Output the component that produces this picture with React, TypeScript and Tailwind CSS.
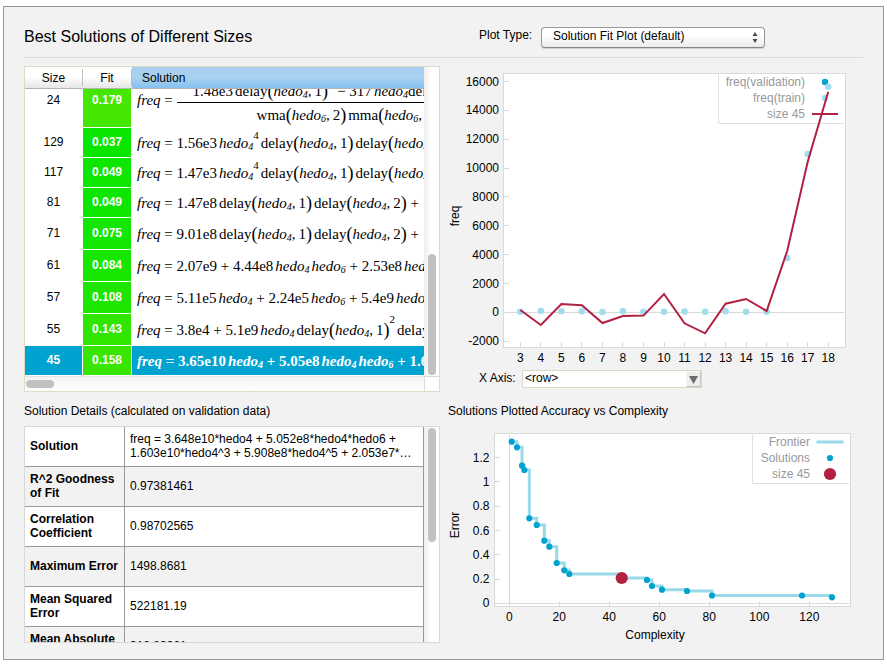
import React from "react";

const V = ({ n, p }: { n: number; p?: number }) => (
  <>
    <i>hedo</i>
    <sub className="text-[10px] italic">{n}</sub>
    {p ? <sup className="text-[11px] -top-[9px]">{p}</sup> : null}
  </>
);
const Paren = ({ c }: { c: string }) => <span className="text-[18px] leading-none align-[-1px]">{c}</span>;
const Gap = () => <span className="inline-block w-[2px]" />;
const Fn = ({ name, n, k, p }: { name: string; n: number; k?: number; p?: number }) => (
  <>
    {name}
    <Paren c="(" />
    <V n={n} />,
    {k ? (
      <>
        <span className="inline-block w-[3px]" />
        {k}
        <Paren c=")" />
      </>
    ) : null}
    {p ? <sup className="text-[11px] -top-[12px]">{p}</sup> : null}
  </>
);

type Row = { size: number; fit: string; height: string; green: string; formula: React.ReactNode };

const rows: Row[] = [
  {
    size: 24,
    fit: "0.179",
    height: "h-[58px]",
    green: "bg-[#45e600]",
    formula: (
      <span className="inline-flex flex-col align-middle w-[260px]">
        <span className="h-[26px] border-b border-black pl-4 pt-[4px] leading-[20px]">
          1.48e3
          <Gap />
          <Fn name="delay" n={4} k={1} p={2} /> − 317
          <Gap />
          <V n={4} />
          delay
        </span>
        <span className="h-6 leading-[24px] pl-20">
          <Fn name="wma" n={6} k={2} />
          <Gap />
          <Fn name="mma" n={6} />
        </span>
      </span>
    ),
  },
  { size: 129, fit: "0.037", height: "h-[30px]", green: "bg-[#09e600]", formula: <>1.56e3<Gap /><V n={4} p={4} /><Gap /><Fn name="delay" n={4} k={1} /><Gap /><Fn name="delay" n={4} /></> },
  { size: 117, fit: "0.049", height: "h-[30px]", green: "bg-[#0ce600]", formula: <>1.47e3<Gap /><V n={4} p={4} /><Gap /><Fn name="delay" n={4} k={1} /><Gap /><Fn name="delay" n={4} /></> },
  { size: 81, fit: "0.049", height: "h-[30px]", green: "bg-[#0ce600]", formula: <>1.47e8<Gap /><Fn name="delay" n={4} k={1} /><Gap /><Fn name="delay" n={4} k={2} /> + 1</> },
  { size: 71, fit: "0.075", height: "h-[32px]", green: "bg-[#13e600]", formula: <>9.01e8<Gap /><Fn name="delay" n={4} k={1} /><Gap /><Fn name="delay" n={4} k={2} /> + 1</> },
  { size: 61, fit: "0.084", height: "h-[32px]", green: "bg-[#17e600]", formula: <>2.07e9 + 4.44e8<Gap /><V n={4} /><Gap /><V n={6} /> + 2.53e8<Gap /><i>hedo</i></> },
  { size: 57, fit: "0.108", height: "h-[32px]", green: "bg-[#1fe600]", formula: <>5.11e5<Gap /><V n={4} /> + 2.24e5<Gap /><V n={6} /> + 5.4e9<Gap /><i>hedo</i></> },
  { size: 55, fit: "0.143", height: "h-[32px]", green: "bg-[#30e600]", formula: <>3.8e4 + 5.1e9<Gap /><V n={4} /><Gap /><Fn name="delay" n={4} k={1} p={2} /><Gap />delay</> },
  { size: 45, fit: "0.158", height: "h-[30px]", green: "bg-[#38e600]", formula: <>3.65e10<Gap /><V n={4} /> + 5.05e8<Gap /><V n={4} /><Gap /><V n={6} /> + 1.6</> },
];

function SolutionsTable() {
  return (
    <div className="h-[326px] border border-[#dcdcc8] bg-white grid grid-cols-[minmax(0,1fr)_15px] grid-rows-[minmax(0,1fr)_15px]">
      <table className="block overflow-hidden">
        <thead className="block">
          <tr className="flex h-[22px] border-b border-[#b4b4b4] bg-linear-to-b from-white from-45% to-[#e6e6e6]">
            <th className="w-[58px] my-[2px] font-normal border-r border-[#c0c0c0] leading-[18px]">Size</th>
            <th className="w-[49px] my-[2px] font-normal border-r border-[#c0c0c0] leading-[18px]">Fit</th>
            <th className="flex-1 font-normal text-left pl-[10px] bg-linear-to-b from-[#a9cdee] via-[#a9d1f1] via-50% to-[#84c0ef] leading-[22px]">
              Solution
            </th>
          </tr>
        </thead>
        <tbody className="flex flex-col justify-end h-[287px] overflow-hidden">
          {rows.map((r) => {
            const sel = r.size === 45;
            return (
              <tr key={r.size} className={`flex shrink-0 ${r.height} ${sel ? "text-white font-bold" : ""}`}>
                <td className={`w-[58px] shrink-0 border-r border-b border-white flex items-center justify-center ${sel ? "bg-[#00a3d0]" : ""} ${r.size === 24 ? "pt-[2px]" : "pb-[2px]"}`}>
                  {r.size}
                </td>
                <td className={`w-[49px] shrink-0 border-r border-b border-white flex items-center justify-center text-white font-bold ${r.green} ${r.size === 24 ? "pt-[2px]" : "pb-[2px]"}`}>
                  {r.fit}
                </td>
                <td
                  className={`flex-1 min-w-0 overflow-hidden border-b border-white flex items-center whitespace-nowrap pl-[5px] font-['Liberation_Serif',serif] text-[15px] leading-[28px] ${sel ? "bg-[#00a3d0]" : ""} ${r.size === 24 ? "pt-[6px]" : ""}`}
                >
                  <span>
                    <i>freq</i> = {r.formula}
                  </span>
                </td>
              </tr>
            );
          })}
        </tbody>
      </table>
      <div className="flex flex-col justify-end items-center bg-linear-to-r from-[#eeeeee] to-white to-50% pb-px">
        <div className="w-2 h-[121px] rounded-full bg-[#c1c1c1]" />
      </div>
      <div className="flex items-center border-t border-[#e4e4e4] bg-linear-to-b from-[#f2f2f2] to-white pl-px">
        <div className="w-7 h-2 rounded-full bg-[#c1c1c1]" />
      </div>
      <div className="border-t border-l border-[#dcdcd4] bg-white" />
    </div>
  );
}

const details: [string, React.ReactNode][] = [
  ["Solution", <>freq = 3.648e10*hedo4 + 5.052e8*hedo4*hedo6 +<br />1.603e10*hedo4^3 + 5.908e8*hedo4^5 + 2.053e7*…</>],
  ["R^2 Goodness of Fit", "0.97381461"],
  ["Correlation Coefficient", "0.98702565"],
  ["Maximum Error", "1498.8681"],
  ["Mean Squared Error", "522181.19"],
  ["Mean Absolute Error", "312.83321"],
];

function DetailsTable() {
  return (
    <div className="h-[217px] border border-[#d8d8d8] flex overflow-hidden">
      <div className="flex-1 min-w-0 overflow-hidden">
        <table className="w-full table-fixed border-separate border-spacing-0 leading-[14px]">
          <tbody>
            {details.map(([label, value], i) => (
              <tr key={label} className={i % 2 ? "bg-[#f2f2f2]" : "bg-white"}>
                <th scope="row" className="w-[100px] h-10 pt-0 pb-[2px] pl-[5px] pr-1 text-left font-bold align-middle border-r border-b border-[#999999]">
                  {label}
                </th>
                <td className="h-10 pt-0 pb-[2px] pl-[5px] pr-0 align-middle border-r border-b border-[#999999] whitespace-nowrap">{value}</td>
              </tr>
            ))}
          </tbody>
        </table>
      </div>
      <div className="w-[15px] flex justify-center pt-px bg-linear-to-r from-[#eeeeee] to-white to-50%">
        <div className="w-2 h-[114px] rounded-full bg-[#c1c1c1]" />
      </div>
    </div>
  );
}

const fitX = (v: number) => 72.3 + (v - 3) * 20.53;
const fitY = (v: number) => 246.4 - v * 0.01443;
const fitLine = [244, 259, 238, 239.3, 257, 250, 249.6, 228, 257.3, 267.3, 237.7, 233, 245, 185, 95.7, 25.7];
const fitDots = [245.7, 245, 245.3, 245.3, 246, 245.3, 245.8, 245.8, 245.6, 245.8, 245.3, 245.8, 245.8, 192, 88, 20.7];
const steps = [-2000, 0, 2000, 4000, 6000, 8000, 10000, 12000, 14000, 16000];

function FitPlot() {
  return (
    <svg viewBox="0 0 415 302" className="block w-full h-auto text-xs" role="img" aria-label="Solution fit plot">
      <rect x="55.5" y="7.5" width="342" height="274" fill="#fff" stroke="#d9d9d9" />
      <line x1="56" x2="396" y1="246.5" y2="246.5" stroke="#d9d9d9" />
      {steps.map((v) => (
        <g key={v}>
          <line x1="56" x2="61" y1={Math.floor(fitY(v)) + 0.5} y2={Math.floor(fitY(v)) + 0.5} stroke="#d9d9d9" />
          <text x="51" y={Math.round(fitY(v)) + 4} textAnchor="end">{v}</text>
        </g>
      ))}
      {fitLine.map((_, i) => (
        <g key={i}>
          <line x1={Math.floor(fitX(i + 3)) + 0.5} x2={Math.floor(fitX(i + 3)) + 0.5} y1="276" y2="281" stroke="#d9d9d9" />
          <text x={fitX(i + 3)} y="296" textAnchor="middle">{i + 3}</text>
        </g>
      ))}
      <text transform="translate(11 150) rotate(-90)" textAnchor="middle">freq</text>
      <path d="M270.5 9V57.5H396" fill="none" stroke="#dfdfdf" />
      <g fill="#999" textAnchor="end">
        <text x="357" y="20">freq(validation)</text>
        <text x="357" y="36">freq(train)</text>
        <text x="357" y="52">size 45</text>
      </g>
      <circle cx="377" cy="16" r="3.2" fill="#00a3cf" />
      <circle cx="377" cy="32" r="3.2" fill="#a3dcec" />
      <line x1="364" x2="390" y1="48" y2="48" stroke="#b22142" strokeWidth="2" />
      {fitDots.map((y, i) => (
        <circle key={i} cx={fitX(i + 3)} cy={y} r="3.3" fill="#a3dcec" />
      ))}
      <polyline points={fitLine.map((y, i) => `${fitX(i + 3)},${y}`).join(" ")} fill="none" stroke="#b22142" strokeWidth="2" />
    </svg>
  );
}

const frontier: [number, number][] = [
  [63.7, 15.7], [69, 21.3], [74, 39.7], [76.3, 44], [81.3, 92.3], [88.7, 99], [96.3, 114.7], [101.3, 120.7], [108.7, 137],
  [116.3, 144.3], [121.3, 148], [173.7, 152], [199, 154], [204, 160], [214, 163.7], [239, 165], [264, 169.5], [354, 169.5], [384, 171.3],
];
const frontierPath = frontier.map(([x, y], i) => (i ? `H${x}V${y}` : `M${x} ${y}`)).join("");

function FrontierPlot() {
  return (
    <svg viewBox="0 0 415 217" className="block w-full h-auto text-xs" role="img" aria-label="Accuracy versus complexity plot">
      <rect x="46.5" y="7.5" width="356" height="173" fill="#fff" stroke="#d9d9d9" />
      <path d="M47 177.5H401M61.5 9V180" fill="none" stroke="#d9d9d9" />
      {["0", "0.2", "0.4", "0.6", "0.8", "1", "1.2"].map((v, i) => {
        const y = 177.4 - i * 24.3;
        return (
          <g key={v}>
            <line x1="47" x2="52" y1={Math.floor(y) + 0.5} y2={Math.floor(y) + 0.5} stroke="#d9d9d9" />
            <text x="41.5" y={Math.round(y) + 4} textAnchor="end">{v}</text>
          </g>
        );
      })}
      {[0, 20, 40, 60, 80, 100, 120].map((v) => (
        <g key={v}>
          <line x1={Math.floor(61.3 + v * 2.5) + 0.5} x2={Math.floor(61.3 + v * 2.5) + 0.5} y1="175" y2="180" stroke="#d9d9d9" />
          <text x={61.3 + v * 2.5} y="195" textAnchor="middle">{v}</text>
        </g>
      ))}
      <text x="207" y="213" textAnchor="middle">Complexity</text>
      <text transform="translate(11 99) rotate(-90)" textAnchor="middle">Error</text>
      <path d="M304.5 9V57.5H401" fill="none" stroke="#dfdfdf" />
      <g fill="#999" textAnchor="end">
        <text x="362" y="20">Frontier</text>
        <text x="362" y="36">Solutions</text>
        <text x="362" y="52">size 45</text>
      </g>
      <line x1="368.5" x2="395.5" y1="16" y2="16" stroke="#99d9ea" strokeWidth="3" />
      <circle cx="382" cy="32" r="3.1" fill="#00a3cf" />
      <circle cx="382" cy="48" r="6.1" fill="#b22142" />
      <path d={frontierPath} fill="none" stroke="#99d9ea" strokeWidth="3" />
      {frontier.map(([x, y]) =>
        x === 173.7 ? (
          <circle key={x} cx={x} cy={y} r="6.1" fill="#b22142" />
        ) : (
          <circle key={x} cx={x} cy={y} r="3.1" fill="#00a3cf" />
        )
      )}
    </svg>
  );
}

export default function App() {
  return (
    <main className="mx-[3px] mt-[6px] border border-[#979797] bg-[#f2f2f2] px-5 pb-4 text-xs leading-[14px] text-black font-['Liberation_Sans',Arial,sans-serif]">
      <header className="grid grid-cols-[416px_minmax(0,1fr)] gap-x-2 items-center h-[51px] pt-[10px] border-b border-[#d9d9d9]">
        <h1 className="text-base leading-5">Best Solutions of Different Sizes</h1>
        <div className="flex items-center pl-[31px]">
          <label htmlFor="plot" className="w-[62px] pb-[4px]">Plot Type:</label>
          <div className="relative">
            <select
              id="plot"
              className="block appearance-none w-[224px] h-[21px] rounded-[4px] border border-[#9a9a9a] border-b-[#858585] bg-linear-to-b from-white from-40% to-[#ebebeb] pl-[11px] pb-[3px] leading-[16px] shadow-[0_1px_1px_#cccccc]"
            >
              <option>Solution Fit Plot (default)</option>
            </select>
            <svg viewBox="0 0 6 11" className="absolute right-[7px] top-[5px] w-[6px] h-[11px] pointer-events-none" aria-hidden="true">
              <path d="M3 0L5.5 4H.5ZM3 11L.5 7H5.5Z" fill="#4a4a4a" />
            </svg>
          </div>
        </div>
      </header>
      <div className="grid grid-cols-[416px_minmax(0,1fr)] gap-x-2 pt-2">
        <section>
          <SolutionsTable />
        </section>
        <section>
          <FitPlot />
          <div className="flex items-center pl-[31px] pt-[2px]">
            <label htmlFor="xaxis" className="w-[43px] pb-[2px]">X Axis:</label>
            <div className="relative">
              <select id="xaxis" className="block appearance-none w-[180px] h-[18px] border border-[#d8d8c4] bg-white pl-[2px] leading-[14px] pb-[2px]">
                <option>&lt;row&gt;</option>
              </select>
              <span className="absolute right-px top-px w-[15px] h-4 bg-[#ededed] border border-[#f8f8f8] border-r-[#c4c4c4] border-b-[#c4c4c4] flex items-end justify-center pb-[2px] pointer-events-none">
                <svg viewBox="0 0 9 8" className="w-[9px] h-2" aria-hidden="true">
                  <path d="M0 0H9L4.5 8Z" fill="#6b6b6b" />
                </svg>
              </span>
            </div>
          </div>
        </section>
        <section className="pt-3">
          <h2 className="pb-2">Solution Details (calculated on validation data)</h2>
          <DetailsTable />
        </section>
        <section className="pt-3">
          <h2 className="pb-2">Solutions Plotted Accuracy vs Complexity</h2>
          <FrontierPlot />
        </section>
      </div>
    </main>
  );
}
